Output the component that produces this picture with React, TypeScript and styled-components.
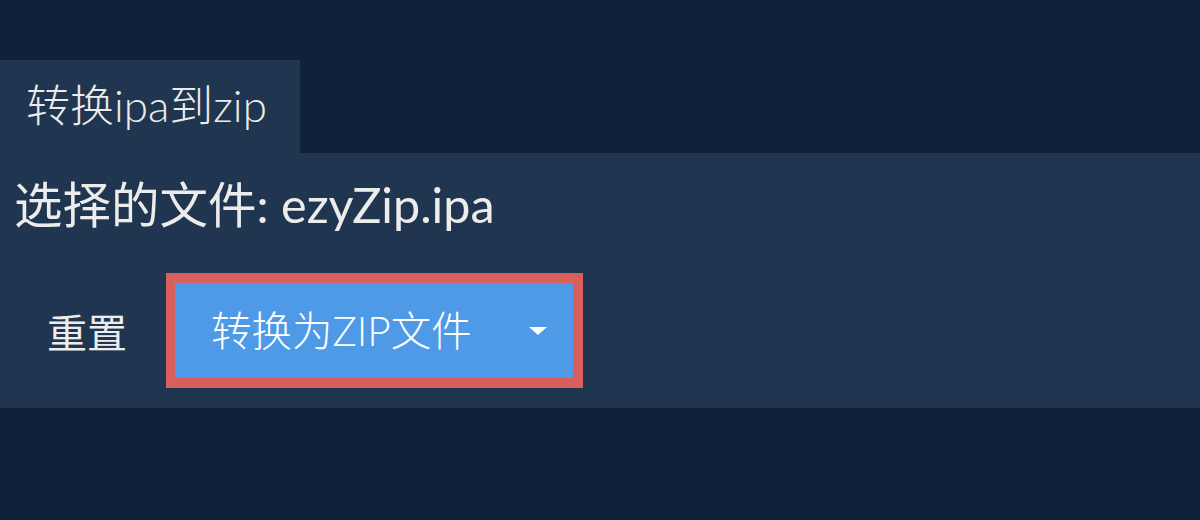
import { createGlobalStyle, styled } from "styled-components";

const GlobalStyle = createGlobalStyle`
  html, body {
    margin: 0;
    padding: 0;
    background-color: #0f2239;
  }
  body {
    font-family: "Lato", "Noto Sans CJK SC", sans-serif;
    color: #ececec;
  }
`;

const Page = styled.div`
  width: 1200px;
  height: 520px;
  padding-top: 60px;
  box-sizing: border-box;
`;

const Tab = styled.div`
  display: flex;
  align-items: center;
  width: 300px;
  height: 93px;
  box-sizing: border-box;
  padding: 0 0 8px 26px;
  background-color: #20354f;
  font-size: 44px;
  font-weight: 300;
`;

const Panel = styled.section`
  background-color: #20354f;
  padding: 22px 14px 20px;
`;

const FileName = styled.div`
  font-size: 48.5px;
  line-height: 58px;
  margin-bottom: 40px;
`;

const ButtonRow = styled.div`
  display: flex;
  align-items: center;
  gap: 8px;
`;

const ResetButton = styled.button`
  background: none;
  border: none;
  color: #ececec;
  font-family: inherit;
  font-size: 40px;
  padding: 0 31px 0 33px;
  cursor: pointer;
`;

const ConvertButton = styled.button`
  display: flex;
  align-items: center;
  width: 417px;
  height: 115px;
  box-sizing: border-box;
  border: 10px solid #d95f5d;
  border-left-width: 9px;
  background-color: #4e9ae6;
  color: #ffffff;
  font-family: inherit;
  font-size: 40.5px;
  font-weight: 300;
  padding: 0 26px 4px 36px;
  cursor: pointer;
`;

const Label = styled.span`
  flex: 1;
  text-align: left;
`;

const Caret = styled.span`
  width: 0;
  height: 0;
  margin-top: 4px;
  border-left: 9px solid transparent;
  border-right: 9px solid transparent;
  border-top: 8px solid #ffffff;
`;

export default function App() {
  return (
    <>
      <GlobalStyle />
      <Page>
        <Tab>转换ipa到zip</Tab>
        <Panel>
          <FileName>选择的文件: ezyZip.ipa</FileName>
          <ButtonRow>
            <ResetButton>重置</ResetButton>
            <ConvertButton>
              <Label>转换为ZIP文件</Label>
              <Caret />
            </ConvertButton>
          </ButtonRow>
        </Panel>
      </Page>
    </>
  );
}
